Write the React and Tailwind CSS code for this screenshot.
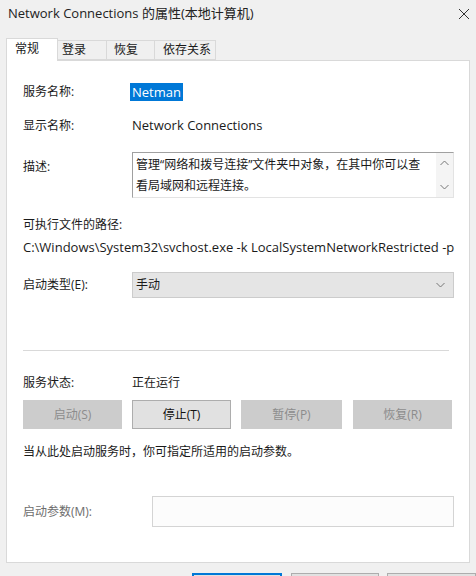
const FONT = "font-['Open_Sans','Noto_Sans_CJK_SC',sans-serif]";

function Row({ label, children, className = "", labelClass = "" }) {
  return (
    <div className={`flex ${className}`}>
      <div className={`w-[109px] shrink-0 ${labelClass}`}>{label}</div>
      {children}
    </div>
  );
}

function Btn({ children, disabled, className = "" }) {
  return (
    <div
      className={`h-[29px] flex items-center justify-center border ${
        disabled
          ? "bg-[#cccccc] border-[#cccccc] text-[#8c8c8c]"
          : "bg-[#e1e1e1] border-[#adadad] text-[#111]"
      } ${className}`}
    >
      {children}
    </div>
  );
}

function Chevron({ up }) {
  return (
    <svg width="9" height="6" viewBox="0 0 9 6">
      <path
        d={up ? "M0.5 5 L4.5 1 L8.5 5" : "M0.5 1 L4.5 5 L8.5 1"}
        fill="none"
        stroke="#777"
        strokeWidth="1"
      />
    </svg>
  );
}

export default function App() {
  return (
    <div className={`w-[476px] h-[576px] overflow-hidden bg-[#f0f0f0] text-[#1a1a1a] text-[12px] ${FONT}`}>
      {/* title bar */}
      <div className="h-[28px] flex items-center justify-between pl-[8px] pr-[4px] text-[13px] text-[#222]">
        <span>Network Connections 的属性(本地计算机)</span>
        <svg width="12" height="12" viewBox="0 0 12 12" className="mr-[2px]">
          <path d="M1 1 L11 11 M11 1 L1 11" stroke="#333" strokeWidth="1" />
        </svg>
      </div>

      {/* tabs */}
      <div className="flex items-end h-[32px] pl-[6px] pt-[10px]">
        <div className="w-[52px] h-[23px] bg-white border border-b-0 border-[#d9d9d9] flex items-start pt-[1px] pl-[8px] relative z-10 -mb-px">常规</div>
        <div className="w-[49px] h-[20px] bg-[#f0f0f0] border border-l-0 border-[#d9d9d9] flex items-center pl-[4px]">登录</div>
        <div className="w-[48px] h-[20px] bg-[#f0f0f0] border border-l-0 border-[#d9d9d9] flex items-center pl-[7px]">恢复</div>
        <div className="w-[61px] h-[20px] bg-[#f0f0f0] border border-l-0 border-[#d9d9d9] flex items-center pl-[8px]">依存关系</div>
      </div>

      {/* panel */}
      <div className="mx-[6px] h-[503px] bg-white border border-[#d9d9d9] pl-[16px] pr-[15px] flex flex-col">
        <Row label="服务名称:" className="mt-[22px] h-[18px] items-center">
          <span className="bg-[#0078d7] text-white text-[13px] px-[2px] -ml-[2px] leading-[18px]">Netman</span>
        </Row>
        <Row label="显示名称:" className="mt-[16px] h-[18px] items-center">
          <span className="text-[13px]">Network Connections</span>
        </Row>
        <Row label="描述:" className="mt-[17px]" labelClass="pt-[6px]">
          <div className="flex-1 h-[46px] border border-[#a0a0a0] border-r-[#e3e3e3] border-b-[#e3e3e3] flex">
            <div className="flex-1 pl-[3px] pt-[1px] leading-[21px] whitespace-nowrap">
              管理“网络和拨号连接”文件夹中对象，在其中你可以查
              <br />
              看局域网和远程连接。
            </div>
            <div className="w-[17px] bg-[#f4f4f4] flex flex-col items-center justify-between py-[7px]">
              <Chevron up />
              <Chevron />
            </div>
          </div>
        </Row>
        <div className="mt-[18px] h-[18px] leading-[18px]">可执行文件的路径:</div>
        <div className="mt-[4px] h-[18px] leading-[18px] text-[13px] whitespace-nowrap">
          C:\Windows\System32\svchost.exe -k LocalSystemNetworkRestricted -p
        </div>
        <Row label="启动类型(E):" className="mt-[16px] items-center">
          <div className="flex-1 h-[26px] bg-[#e5e5e5] border border-[#cccccc] flex items-center justify-between pl-[3px] pr-[8px]">
            <span>手动</span>
            <Chevron />
          </div>
        </Row>
        <div className="mt-[52px] mr-[5px] h-px bg-[#d9d9d9]" />
        <Row label="服务状态:" className="mt-[23px] h-[18px] items-center">
          <span>正在运行</span>
        </Row>
        <div className="mt-[8px] flex">
          <Btn disabled className="w-[99px]">启动(S)</Btn>
          <Btn className="w-[99px] ml-[10px]">停止(T)</Btn>
          <Btn disabled className="w-[101px] ml-[10px]">暂停(P)</Btn>
          <Btn disabled className="w-[99px] ml-[11px]">恢复(R)</Btn>
        </div>
        <div className="mt-[14px] h-[18px] leading-[18px]">当从此处启动服务时，你可指定所适用的启动参数。</div>
        <div className="mt-[35px] flex items-center">
          <div className="w-[129px] shrink-0 text-[#6d6d6d]">启动参数(M):</div>
          <div className="flex-1 h-[31px] border border-[#d4d4d4] bg-[#fcfcfc]" />
        </div>
      </div>

      {/* dialog buttons */}
      <div className="mt-[10px] flex pl-[192px]">
        <div className="w-[90px] h-[23px] bg-[#e1e1e1] border-2 border-[#0078d7]" />
        <div className="w-[89px] h-[23px] ml-[9px] bg-[#e1e1e1] border border-[#adadad]" />
        <div className="w-[89px] h-[23px] ml-[8px] bg-[#e1e1e1] border border-[#adadad]" />
      </div>
    </div>
  );
}
